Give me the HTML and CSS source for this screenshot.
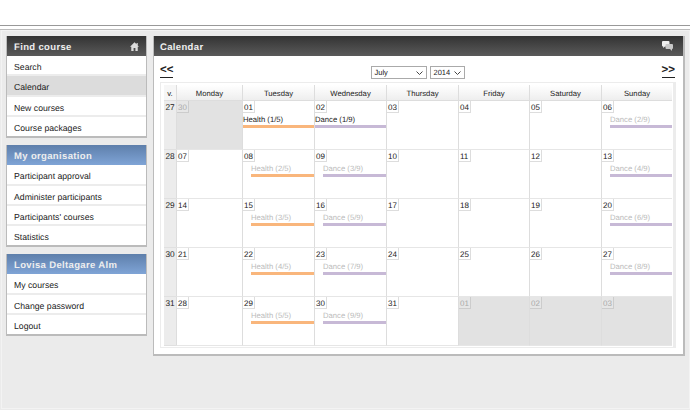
FILE: index.html
```html
<!DOCTYPE html>
<html lang="en">
<head>
<meta charset="utf-8">
<title>Calendar</title>
<link rel="stylesheet" href="styles.css">
</head>
<body>
<div class="top"></div>
<div class="page">
  <aside class="side">
    <section class="box">
      <h2 class="head dark">Find course
        <svg class="ico-home" viewBox="0 0 10 10" width="9" height="9"><path d="M5 .3 0 5.2h1.4V10h2.6V6.8h2V10h2.6V5.2H10L8.6 3.9V1H7.3v1.6z" fill="#ddd"/></svg>
      </h2>
      <a class="item">Search</a>
      <a class="item active">Calendar</a>
      <a class="item">New courses</a>
      <a class="item">Course packages</a>
    </section>
    <section class="box">
      <h2 class="head blue">My organisation</h2>
      <a class="item">Participant approval</a>
      <a class="item">Administer participants</a>
      <a class="item">Participants' courses</a>
      <a class="item">Statistics</a>
    </section>
    <section class="box">
      <h2 class="head blue">Lovisa Deltagare Alm</h2>
      <a class="item">My courses</a>
      <a class="item">Change password</a>
      <a class="item">Logout</a>
    </section>
  </aside>
  <main class="main">
    <h2 class="head dark mainhead">Calendar
      <svg class="ico-chat" viewBox="0 0 11 10" width="11" height="10"><path d="M1 0h5.500a1 1 0 0 1 1 1v3.500a1 1 0 0 1-1 1H3L1.200 7V5.500H1a1 1 0 0 1-1-1V1a1 1 0 0 1 1-1z" fill="#eee"/><path d="M4.500 3h5.500a1 1 0 0 1 1 1v3a1 1 0 0 1-1 1v2L8 8H4.500a1 1 0 0 1-1-1V4a1 1 0 0 1 1-1z" fill="#c8c8c8"/></svg>
    </h2>
    <div class="nav">
      <a class="arrow">&lt;&lt;</a>
      <div class="selects">
        <span class="sel sel-month">July<svg class="chev" viewBox="0 0 7 4" width="7" height="4"><path d="M.5.5 3.500 3.500 6.500.5" fill="none" stroke="#444" stroke-width="1"/></svg></span>
        <span class="sel sel-year">2014<svg class="chev" viewBox="0 0 7 4" width="7" height="4"><path d="M.5.5 3.500 3.500 6.500.5" fill="none" stroke="#444" stroke-width="1"/></svg></span>
      </div>
      <a class="arrow">&gt;&gt;</a>
    </div>
    <div class="calwrap">
      <div class="cal">
        <div class="hd wk">v.</div><div class="hd">Monday</div><div class="hd">Tuesday</div><div class="hd">Wednesday</div><div class="hd">Thursday</div><div class="hd">Friday</div><div class="hd">Saturday</div><div class="hd">Sunday</div>

        <div class="wk">27</div>
        <div class="day off"><span class="num">30</span></div>
        <div class="day"><span class="num">01</span><div class="ev start health">Health (1/5)</div></div>
        <div class="day"><span class="num">02</span><div class="ev start dance">Dance (1/9)</div></div>
        <div class="day"><span class="num">03</span></div>
        <div class="day"><span class="num">04</span></div>
        <div class="day"><span class="num">05</span></div>
        <div class="day"><span class="num">06</span><div class="ev dance">Dance (2/9)</div></div>

        <div class="wk">28</div>
        <div class="day"><span class="num">07</span></div>
        <div class="day"><span class="num">08</span><div class="ev health">Health (2/5)</div></div>
        <div class="day"><span class="num">09</span><div class="ev dance">Dance (3/9)</div></div>
        <div class="day"><span class="num">10</span></div>
        <div class="day"><span class="num">11</span></div>
        <div class="day"><span class="num">12</span></div>
        <div class="day"><span class="num">13</span><div class="ev dance">Dance (4/9)</div></div>

        <div class="wk">29</div>
        <div class="day"><span class="num">14</span></div>
        <div class="day"><span class="num">15</span><div class="ev health">Health (3/5)</div></div>
        <div class="day"><span class="num">16</span><div class="ev dance">Dance (5/9)</div></div>
        <div class="day"><span class="num">17</span></div>
        <div class="day"><span class="num">18</span></div>
        <div class="day"><span class="num">19</span></div>
        <div class="day"><span class="num">20</span><div class="ev dance">Dance (6/9)</div></div>

        <div class="wk">30</div>
        <div class="day"><span class="num">21</span></div>
        <div class="day"><span class="num">22</span><div class="ev health">Health (4/5)</div></div>
        <div class="day"><span class="num">23</span><div class="ev dance">Dance (7/9)</div></div>
        <div class="day"><span class="num">24</span></div>
        <div class="day"><span class="num">25</span></div>
        <div class="day"><span class="num">26</span></div>
        <div class="day"><span class="num">27</span><div class="ev dance">Dance (8/9)</div></div>

        <div class="wk">31</div>
        <div class="day"><span class="num">28</span></div>
        <div class="day"><span class="num">29</span><div class="ev health">Health (5/5)</div></div>
        <div class="day"><span class="num">30</span><div class="ev dance">Dance (9/9)</div></div>
        <div class="day"><span class="num">31</span></div>
        <div class="day off"><span class="num">01</span></div>
        <div class="day off"><span class="num">02</span></div>
        <div class="day off"><span class="num">03</span></div>
      </div>
    </div>
  </main>
</div>
</body>
</html>
```
FILE: styles.css
```css
* { box-sizing: border-box; }
html, body { margin: 0; padding: 0; }
body {
  width: 690px;
  height: 410px;
  overflow: hidden;
  background: #ebebeb;
  font-family: "Liberation Sans", Arial, sans-serif;
  font-size: 8.7px;
  color: #222;
  text-rendering: geometricPrecision;
}
.top {
  height: 30px;
  background: #fff;
  border-bottom: 1px solid #bbb;
}
.top::before {
  content: "";
  display: block;
  height: 25px;
  border-bottom: 1px solid #999;
}
.page {
  display: flex;
  align-items: flex-start;
  gap: 6px;
  height: 379px;
  margin-left: 1px;
  padding: 5px 0 0 4px;
  border: 1px solid #f3f3f3;
}
.side {
  width: 141px;
  flex: none;
  display: flex;
  flex-direction: column;
  gap: 7px;
}
.box {
  background: #fff;
  border: 1px solid #bbb;
  border-top: 0;
  border-bottom-width: 2px;
}
.head {
  margin: 0;
  height: 20px;
  padding: 3px 7px 0 7px;
  display: flex;
  align-items: center;
  justify-content: space-between;
  font-size: 9.5px;
  font-weight: bold;
  letter-spacing: .35px;
  color: #eee;
}
.dark { background: linear-gradient(#333, #5a5a5a); }
.blue { background: linear-gradient(#5e7fab, #7fa4d6); }
.item {
  display: block;
  height: 20.4px;
  line-height: 22px;
  padding-left: 7px;
  border-bottom: 2px solid #ececec;
}
.item:last-child { border-bottom: 0; height: 19px; }
.active { background: #dcdcdc; }
.main {
  width: 532px;
  height: 320px;
  flex: none;
  background: #fff;
  border: 1px solid #bbb;
  border-top: 0;
  border-bottom-width: 2px;
  border-right-width: 2px;
}
.mainhead { padding-left: 6px; padding-right: 10px; }
.ico-chat { margin-top: -4px; }
.ico-home { margin-top: -3px; }
.nav {
  display: flex;
  justify-content: space-between;
  align-items: flex-start;
  height: 26px;
  padding: 8px 8px 0 6px;
}
.arrow {
  font-size: 11.5px;
  font-weight: bold;
  line-height: 13px;
  color: #222;
  border-bottom: 1px solid #222;
  height: 14px;
}
.selects {
  display: flex;
  gap: 3px;
  margin-top: 2px;
}
.sel {
  display: flex;
  align-items: center;
  justify-content: space-between;
  height: 13px;
  border: 1px solid #aaa;
  padding: 0 3px 0 3px;
  background: #fff;
  font-size: 7.5px;
}
.sel-month { width: 56px; }
.sel-year { width: 35px; }
.calwrap {
  margin: 0 7px 0 6px;
  height: 266px;
  border: 1px solid #ececec;
  border-right-width: 3px;
  padding: 2px 1px 2px 3px;
}
.cal {
  display: grid;
  grid-template-columns: 12px 66px 72px 72px 72px 71px 72px 71px;
  grid-template-rows: 16px repeat(5, 49px);
  height: 261px;
}
.hd {
  background: linear-gradient(#fff, #eee);
  border-left: 1px solid #ddd;
  border-bottom: 1px solid #ddd;
  text-align: center;
  font-size: 7.7px;
  line-height: 17px;
  color: #222;
}
.hd.wk { border-left: 0; background: #f6f6f6; padding-top: 0; line-height: 17px; font-size: 7.7px; }
.wk {
  background: #ececec;
  border-bottom: 1px solid #e0e0e0;
  text-align: center;
  font-size: 8.3px;
  padding-top: 1px;
  line-height: 11px;
}
.day {
  border-left: 1px solid #ddd;
  border-bottom: 1px solid #e6e6e6;
  background: #fff;
  min-width: 0;
}
.num {
  display: block;
  width: 12px;
  height: 12px;
  padding-left: 1px;
  background: #fff;
  border-right: 1px solid #ddd;
  border-bottom: 1px solid #ddd;
  font-size: 8px;
  line-height: 13px;
  color: #222;
}
.off { background: #e2e2e2; }
.off .num { background: #e6e6e6; border-color: #ccc; color: #aaa; }
.ev {
  margin: 1px 0 0 8px;
  font-size: 7.7px;
  line-height: 12px;
  height: 14px;
  color: #bbb;
  border-bottom: 3px solid;
  white-space: nowrap;
}
.ev.start { margin-left: 0; color: #222; }
.health { border-bottom-color: #f9b67c; }
.dance { border-bottom-color: #c7b9d6; }
```
